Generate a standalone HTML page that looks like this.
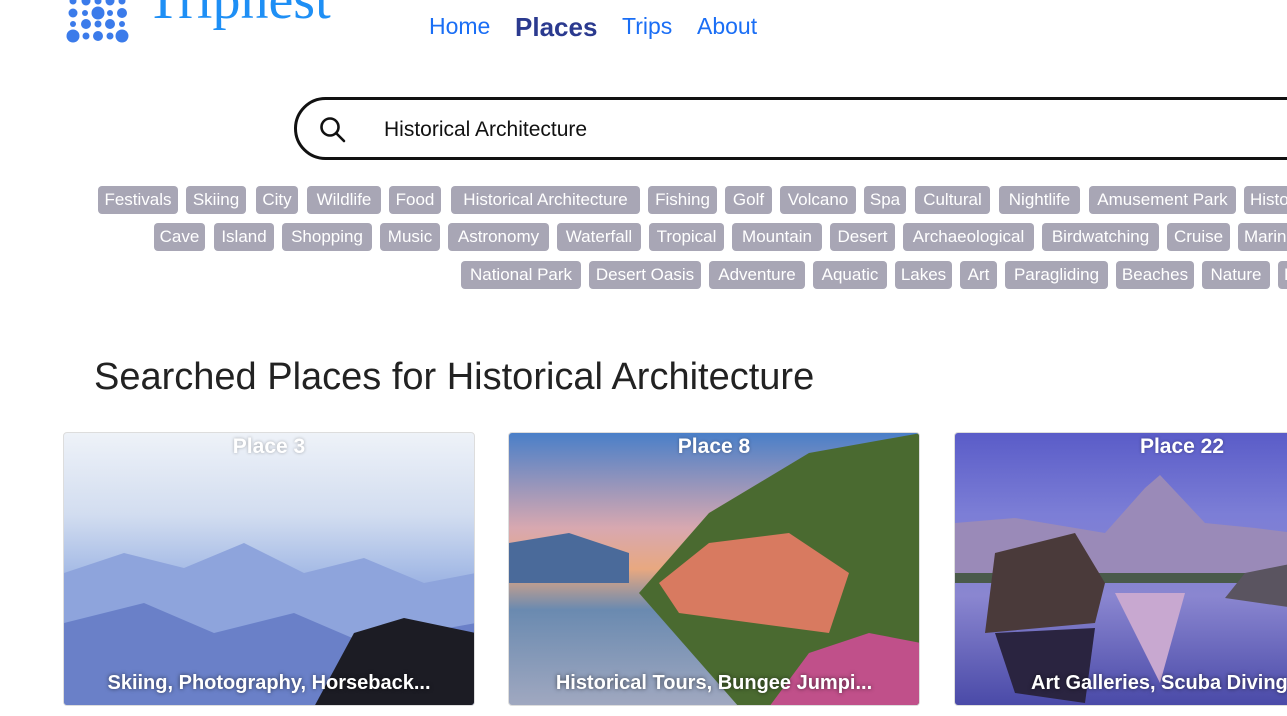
<!DOCTYPE html>
<html><head><meta charset="utf-8"><style>
*{margin:0;padding:0;box-sizing:border-box}
body{width:1287px;height:716px;overflow:hidden;background:#fff;font-family:"Liberation Sans",sans-serif;position:relative}
.a{position:absolute}
.nav{position:absolute;top:13px;font-size:23px;color:#1a6ef5}
.tag{position:absolute;height:28px;background:#a8a6b5;color:#fff;border-radius:4px;font-size:17px;line-height:28px;text-align:center;white-space:nowrap;overflow:hidden}
.card{position:absolute;top:432px;height:274px;width:412px;border-radius:4px;overflow:hidden;border:1px solid #ddd}
.card svg{position:absolute;left:0;top:0}
.card .t{position:absolute;top:2px;left:0;right:0;text-align:center;color:#fff;font-size:21px;font-weight:bold;text-shadow:0 0 3px rgba(0,0,0,.3)}
.card .b{position:absolute;bottom:10px;left:0;right:0;text-align:center;color:#fff;font-size:20px;font-weight:bold;text-shadow:0 0 4px rgba(0,0,0,.6);white-space:nowrap}
</style></head><body>
<svg class="a" style="left:62px;top:-4px" width="70" height="50" fill="#3b7bea">
<circle cx="11" cy="5" r="3.5"/><circle cx="24" cy="5" r="4.5"/><circle cx="36" cy="5" r="3.5"/><circle cx="48" cy="5" r="4.5"/><circle cx="60" cy="5" r="3.5"/>
<circle cx="11" cy="17" r="4.5"/><circle cx="23" cy="17" r="3"/><circle cx="36" cy="17" r="6.5"/><circle cx="48" cy="17" r="3"/><circle cx="60" cy="17" r="5"/>
<circle cx="11" cy="28" r="3"/><circle cx="24" cy="28" r="5"/><circle cx="36" cy="28" r="3.5"/><circle cx="48" cy="28" r="5"/><circle cx="60" cy="28" r="3"/>
<circle cx="11" cy="40" r="6.5"/><circle cx="24" cy="40" r="3.5"/><circle cx="36" cy="40" r="5"/><circle cx="48" cy="40" r="3.5"/><circle cx="60" cy="40" r="6.5"/>
</svg>
<div class="a" style="left:146px;top:-32px;font-family:'Liberation Serif',serif;font-size:56px;color:#1e8ff5">Tripnest</div>
<div class="nav" style="left:429px">Home</div>
<div class="nav" style="left:515px;top:12px;font-size:26px;font-weight:bold;color:#2b3a8f">Places</div>
<div class="nav" style="left:622px">Trips</div>
<div class="nav" style="left:697px">About</div>
<div class="a" style="left:294px;top:97px;width:1100px;height:63px;border:3px solid #111;border-radius:32px"></div>
<svg class="a" style="left:318px;top:115px" width="30" height="30" fill="none" stroke="#111" stroke-width="2.6"><circle cx="12" cy="12" r="8.5"/><path d="M18 18l8 8" stroke-linecap="round"/></svg>
<div class="a" style="left:384px;top:118px;font-size:21px;color:#111">Historical Architecture</div>
<div id="tags"></div>
<div class="a" style="left:94px;top:356px;font-size:38px;color:#222">Searched Places for Historical Architecture</div>
<div class="card" style="left:63px;background:linear-gradient(180deg,#eef2f8 0%,#d2ddf0 30%,#a8bde6 50%,#7e98d8 70%,#5a74c4 100%)">
<svg width="412" height="274"><path d="M0 140 L60 120 L120 135 L180 110 L240 140 L300 125 L360 150 L412 140 V274 H0Z" fill="#8ea4dc"/><path d="M0 190 L80 170 L150 200 L230 180 L300 210 L412 190 V274 H0Z" fill="#6a80c8"/><path d="M250 274 L290 200 L340 185 L412 200 V274Z" fill="#1c1c24"/></svg>
<div class="t">Place 3</div><div class="b">Skiing, Photography, Horseback...</div></div>
<div class="card" style="left:508px;background:linear-gradient(180deg,#4a7fc8 0%,#d8a8b0 35%,#e8a880 50%,#6a8ab0 65%,#a0a8c0 100%)">
<svg width="412" height="274"><path d="M0 110 L60 100 L120 120 L120 150 L0 150Z" fill="#4a6a9a"/><path d="M230 274 L130 160 L200 80 L300 20 L412 0 V274Z" fill="#4a6a30"/><path d="M150 150 L200 110 L280 100 L340 140 L320 200 L170 180Z" fill="#d87a60"/><path d="M260 274 L300 220 L360 200 L412 210 V274Z" fill="#c0508a"/></svg>
<div class="t">Place 8</div><div class="b">Historical Tours, Bungee Jumpi...</div></div>
<div class="card" style="left:954px;width:400px;background:linear-gradient(180deg,#5a5cc8 0%,#7c7ed6 30%,#8a86d0 60%,#4a4aa8 100%)">
<svg width="400" height="274"><path d="M0 90 L60 85 L150 100 L190 55 L205 42 L250 90 L300 95 L340 100 V140 H0Z" fill="#9a8ab8"/><path d="M0 140 L340 140 V150 H0Z" fill="#4a5a4a"/><path d="M30 200 L40 120 L120 100 L150 150 L140 190Z" fill="#4a3a3a"/><path d="M40 200 L140 195 L130 270 L60 260Z" fill="#2a2440"/><path d="M270 165 L290 140 L340 130 V175Z" fill="#5a5460"/><path d="M160 160 L230 160 L205 250Z" fill="#c8a8d0"/></svg>
<div class="t" style="width:454px;right:auto">Place 22</div><div class="b" style="left:76px;right:auto;text-align:left">Art Galleries, Scuba Diving</div></div>
<script>
var rows=[[186,[["Festivals",98,178],["Skiing",186,246],["City",256,298],["Wildlife",307,381],["Food",389,441],["Historical Architecture",451,640],["Fishing",648,717],["Golf",725,772],["Volcano",780,856],["Spa",864,906],["Cultural",915,990],["Nightlife",999,1080],["Amusement Park",1089,1236],["Historical",1244,1340]]],
[223,[["Cave",154,205],["Island",214,274],["Shopping",282,372],["Music",380,440],["Astronomy",448,549],["Waterfall",557,641],["Tropical",649,724],["Mountain",732,822],["Desert",830,895],["Archaeological",903,1034],["Birdwatching",1042,1159],["Cruise",1167,1230],["Marine",1238,1320]]],
[261,[["National Park",461,581],["Desert Oasis",589,701],["Adventure",709,805],["Aquatic",813,887],["Lakes",895,952],["Art",960,997],["Paragliding",1005,1108],["Beaches",1116,1194],["Nature",1202,1270],["Hiking",1278,1360]]]];
var h="";rows.forEach(function(r){r[1].forEach(function(t){var w=t[2]-t[1];h+='<div class="tag" style="left:'+t[1]+'px;top:'+r[0]+'px;width:'+w+'px'+(t[1]>1237?';text-align:left;padding-left:6px':'')+'">'+t[0]+'</div>';});});
document.getElementById("tags").innerHTML=h;
</script>
</body></html>
